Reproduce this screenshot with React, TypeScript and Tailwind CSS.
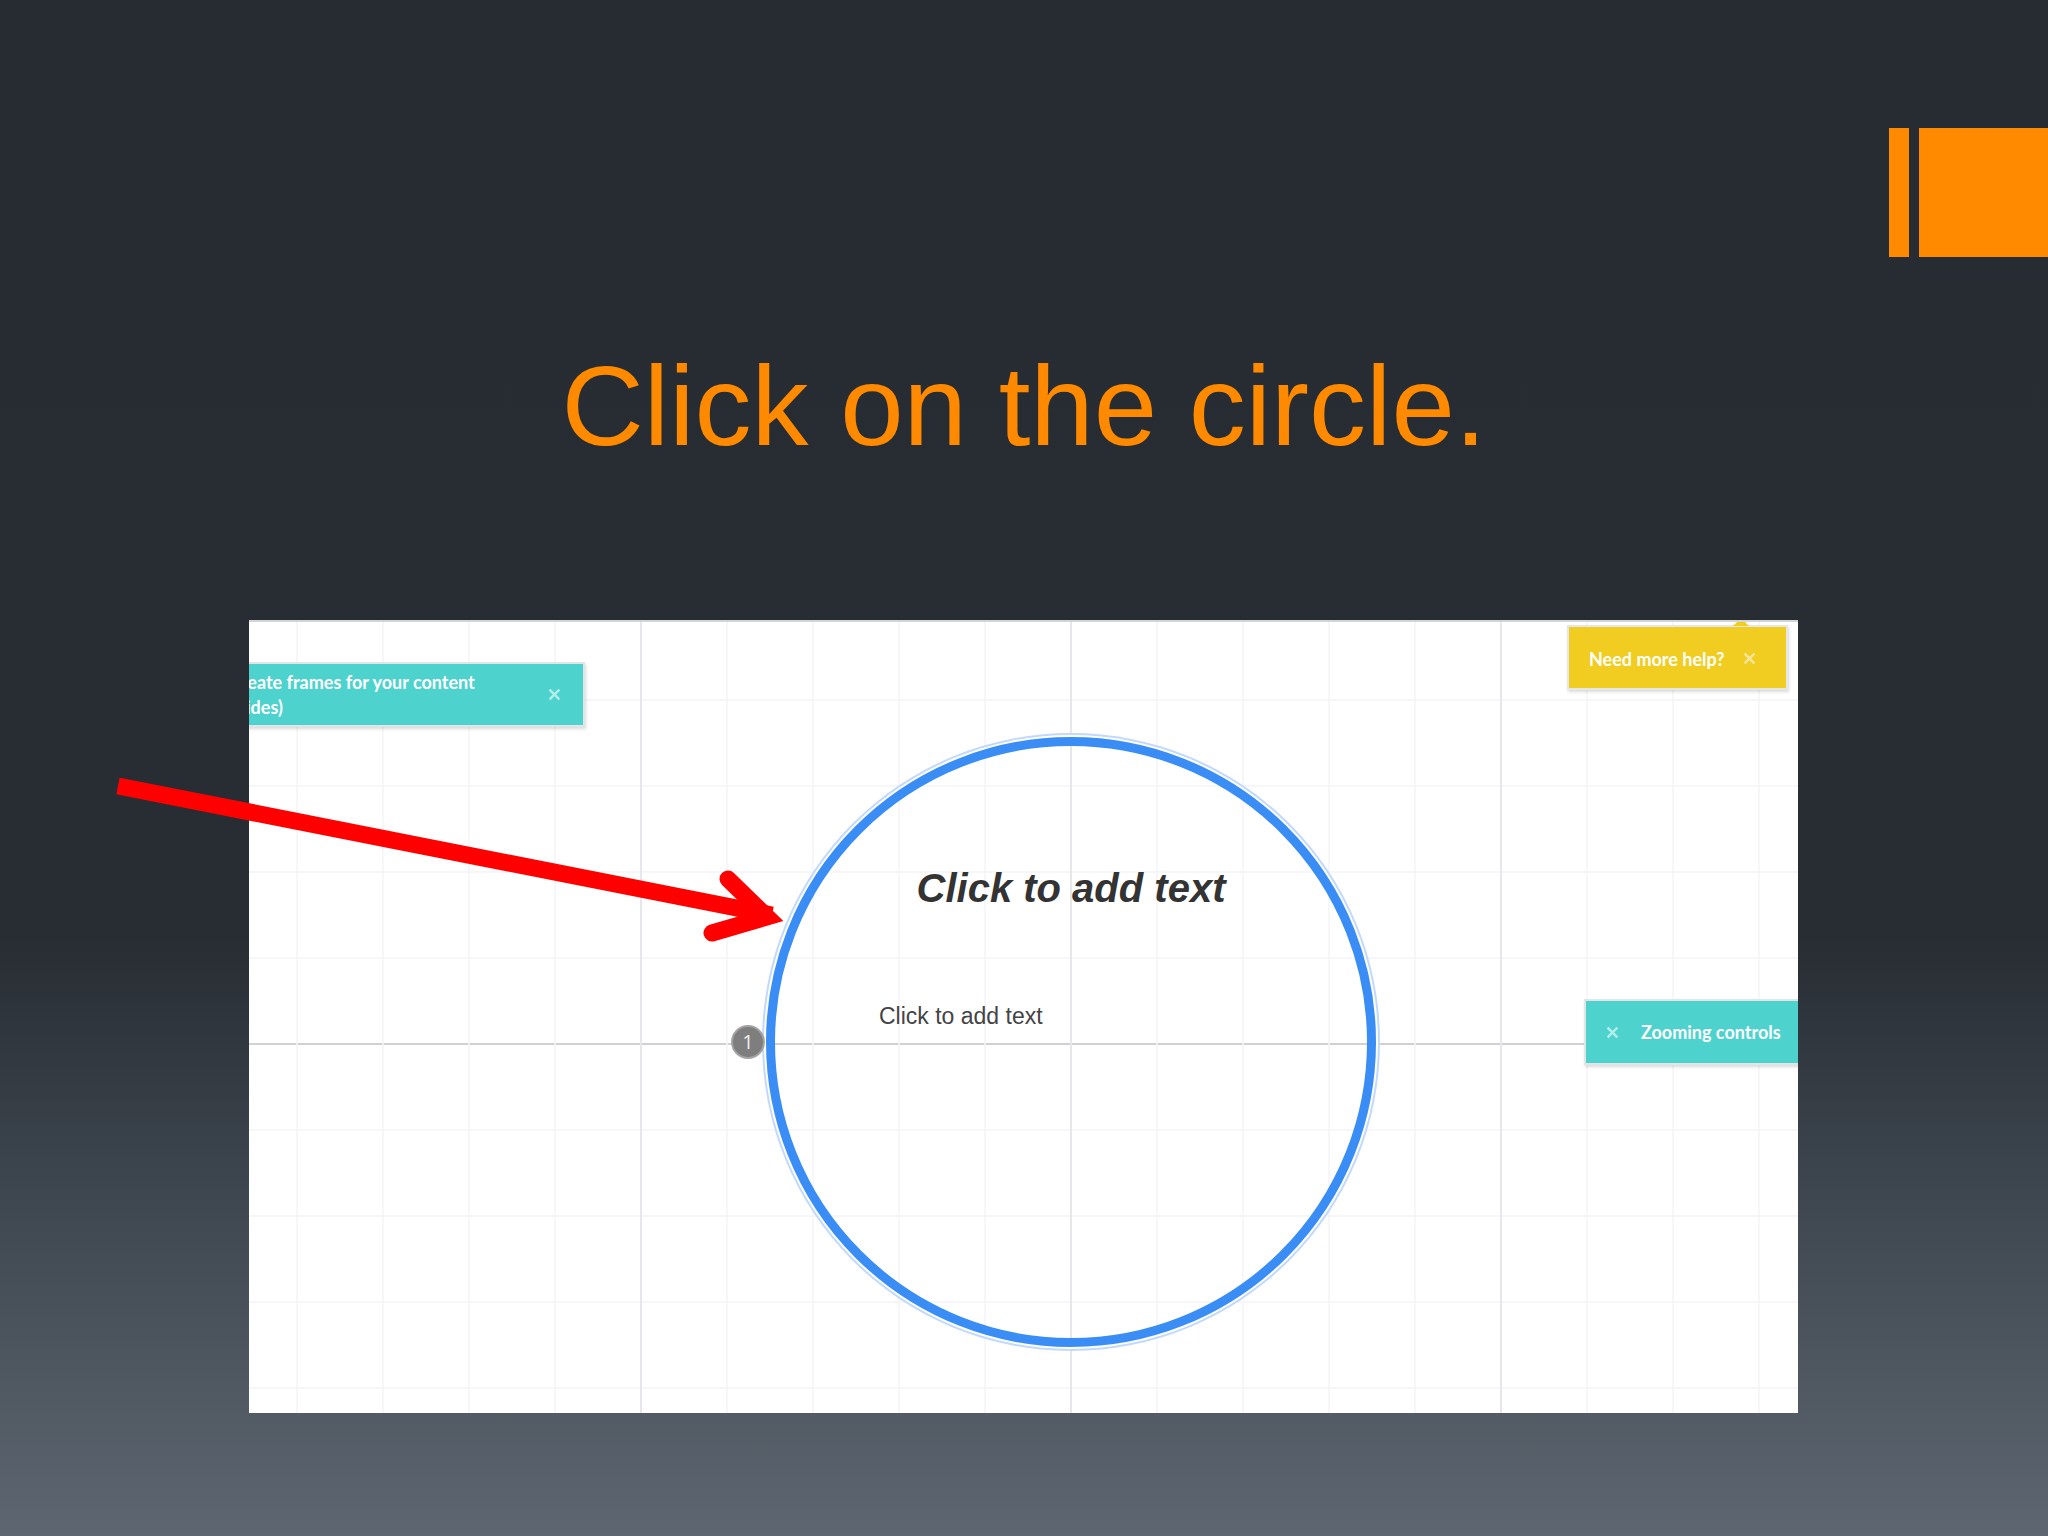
const GRID_X = Array.from({ length: 18 }, (_, i) => 48 + i * 86);
const GRID_Y = Array.from({ length: 9 }, (_, i) => 78 + i * 86);

function CloseIcon({ className }: { className?: string }) {
  return (
    <svg viewBox="0 0 16 16" className={className} fill="none" stroke="currentColor" strokeWidth={3} strokeLinecap="square">
      <path d="M3 3l10 10M13 3L3 13" />
    </svg>
  );
}

function CanvasGrid() {
  return (
    <svg className="absolute inset-0" width={1549} height={793} viewBox="0 0 1549 793">
      {GRID_Y.map((y) => (
        <line
          key={"h" + y}
          x1={0}
          x2={1549}
          y1={y}
          y2={y}
          stroke={y === 422 ? "#d0d1d4" : "#f4f5f7"}
          strokeWidth={y === 422 ? 2 : 1.5}
        />
      ))}
      {GRID_X.map((x) => (
        <line
          key={"v" + x}
          x1={x}
          x2={x}
          y1={0}
          y2={793}
          stroke={(x - 822) % 430 === 0 ? "#e6e7eb" : "#f4f5f7"}
          strokeWidth={(x - 822) % 430 === 0 ? 2 : 1.5}
        />
      ))}
    </svg>
  );
}

function PreziCanvas() {
  return (
    <div className="relative ml-[249px] mt-[157px] h-[793px] w-[1549px] overflow-hidden border-t-2 border-[#d2d5d8] bg-white">
      <CanvasGrid />

      {/* frame circle */}
      <div className="absolute left-[517px] top-[115px] flex h-[610px] w-[610px] flex-col rounded-full border-[9px] border-[#3a8df5] shadow-[0_0_0_2px_#ffffff,0_0_0_4px_#c3d9fb]">
        <p className="mt-[122px] text-center text-[40px] font-bold italic leading-none text-[#333333]">Click to add text</p>
        <p className="ml-[104px] mt-[97px] text-[23px] leading-none text-[#444444]">Click to add text</p>
      </div>

      {/* frame number */}
      <div className="absolute left-[482px] top-[403px] flex h-[34px] w-[34px] items-center justify-center rounded-full border-2 border-[#a3a3a3] bg-[#7e7e7e] font-['Open_Sans',sans-serif] text-[20px] leading-none text-[#eeeeee]">
        1
      </div>

      {/* hint: frames */}
      <div className="absolute left-[-40px] top-[40px] flex h-[65px] w-[376px] items-center justify-between border-2 border-[#e2e5e7] bg-[#4ed2cd] pl-[18px] pr-[22px] shadow-[1px_2px_3px_rgba(0,0,0,0.15)]">
        <p className="font-['Lato',sans-serif] text-[18px] font-bold leading-[25px] text-white">
          Create frames for your content
          <br />
          (slides)
        </p>
        <CloseIcon className="h-[13px] w-[13px] text-[#b2eeeb]" />
      </div>

      {/* hint: help */}
      <div className="absolute left-[1318px] top-[3px] flex h-[65px] w-[221px] items-center border-2 border-[#e6e6e6] bg-[#f0cd20] pl-[20px] pt-[2px] shadow-[1px_2px_3px_rgba(0,0,0,0.15)]">
        <span className="font-['Lato',sans-serif] text-[18px] font-bold leading-none text-white">Need more help?</span>
        <CloseIcon className="ml-[19px] h-[13px] w-[13px] text-[#f8e6a0]" />
        <div className="absolute left-[164px] top-[-9px] h-0 w-0 border-x-[8px] border-b-[8px] border-x-transparent border-b-[#f0cd20]" />
      </div>

      {/* hint: zoom */}
      <div className="absolute left-[1335px] top-[377px] flex h-[66px] w-[240px] items-center border-2 border-[#e2e5e7] bg-[#4ed2cd] pl-[20px] shadow-[1px_2px_3px_rgba(0,0,0,0.15)]">
        <CloseIcon className="h-[13px] w-[13px] text-[#b2eeeb]" />
        <span className="ml-[22px] font-['Lato',sans-serif] text-[18px] font-bold leading-none text-white">Zooming controls</span>
      </div>
    </div>
  );
}

function RedArrow() {
  return (
    <svg className="pointer-events-none absolute inset-0" width={2048} height={1536} viewBox="0 0 2048 1536">
      <line x1={118} y1={786} x2={772} y2={915} stroke="#ff0000" strokeWidth={17} />
      <polyline
        points="728,879 767,917 712,933"
        fill="none"
        stroke="#ff0000"
        strokeWidth={17}
        strokeLinecap="round"
        strokeLinejoin="miter"
      />
    </svg>
  );
}

export default function App() {
  return (
    <div className="relative flex h-[1536px] w-[2048px] flex-col overflow-hidden bg-[linear-gradient(to_bottom,#272c32_0%,#282d33_61%,#3a424b_75%,#5e6771_100%)] font-['Liberation_Sans',Arial,sans-serif]">
      <div className="flex justify-end gap-[10px] pt-[128px]">
        <div className="h-[129px] w-[20px] bg-[#ff8a00]" />
        <div className="h-[129px] w-[129px] bg-[#ff8a00]" />
      </div>

      <h1 className="mt-[92px] text-center text-[114px] font-normal leading-none text-[#ff8a00]">Click on the circle.</h1>

      <PreziCanvas />

      <RedArrow />
    </div>
  );
}
